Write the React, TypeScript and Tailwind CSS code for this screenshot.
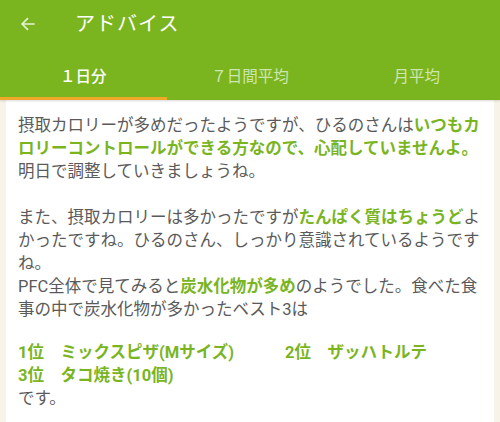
import React from 'react';

const G = ({ children }: { children: React.ReactNode }) => (
  <span className="font-bold text-[#7ab51f]">{children}</span>
);

const tabs = ['１日分', '７日間平均', '月平均'];

export default function App() {
  const active = 0;

  return (
    <div
      className="w-[500px] h-[422px] overflow-hidden flex flex-col bg-[#f7f3e9]"
      style={{ fontFamily: 'Roboto, "Noto Sans CJK JP", sans-serif' }}
    >
      {/* Header */}
      <div className="bg-[#7ab51f] shadow-[0_1px_2px_rgba(0,0,0,0.15)] z-10">
        <div className="h-[48px] flex items-center">
          <svg viewBox="0 0 24 24" className="w-[20px] h-[20px] ml-[18px] text-[#e6f2d4]" fill="none" stroke="currentColor" strokeWidth="2">
            <path d="M20 12H5M12 5l-7 7 7 7" />
          </svg>
          <h1 className="ml-[37px] text-white text-[20px] tracking-[1px]">アドバイス</h1>
        </div>
        <div className="h-[52px] flex">
          {tabs.map((t, i) => (
            <div key={t} className="flex-1 flex flex-col">
              <div
                className={
                  'flex-1 flex items-center justify-center pt-[10px] text-[15.5px] ' +
                  (i === active ? 'text-white font-medium' : 'text-[#cfe5ae]')
                }
              >
                {t}
              </div>
              <div className={'h-[3px] ' + (i === active ? 'bg-[#f0a828]' : 'bg-transparent')} />
            </div>
          ))}
        </div>
      </div>

      {/* Body */}
      <div className="flex-1 mx-[6px] bg-white px-[12px] pt-[14px] text-[16.5px] leading-[23px] text-[#5a5a5a] whitespace-nowrap">
        <p>
          摂取カロリーが多めだったようですが、ひるのさんは<G>いつもカ</G>
          <br />
          <G>ロリーコントロールができる方なので、心配していませんよ。</G>
          <br />
          明日で調整していきましょうね。
        </p>
        <p className="mt-[23px]">
          また、摂取カロリーは多かったですが<G>たんぱく質はちょうど</G>よ
          <br />
          かったですね。ひるのさん、しっかり意識されているようです
          <br />
          ね。
          <br />
          PFC全体で見てみると<G>炭水化物が多め</G>のようでした。食べた食
          <br />
          事の中で炭水化物が多かったベスト3は
        </p>
        <div className="mt-[20px] font-bold text-[#7ab51f]">
          <div className="flex">
            <span className="w-[267px]">1位　ミックスピザ(Mサイズ)</span>
            <span>2位　ザッハトルテ</span>
          </div>
          <div>3位　タコ焼き(10個)</div>
        </div>
        <p>です。</p>
      </div>
    </div>
  );
}
